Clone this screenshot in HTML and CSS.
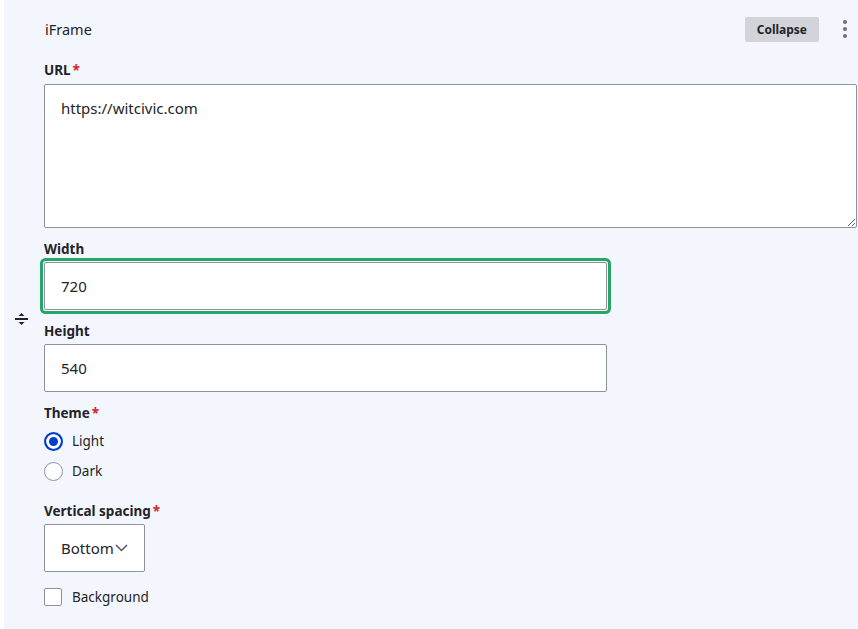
FILE: index.html
```html
<!DOCTYPE html>
<html lang="en">
<head>
    <meta charset="utf-8">
    <meta name="viewport" content="width=device-width, initial-scale=1.0">
    <title>iFrame paragraph</title>
    <link rel="stylesheet" href="styles.css">
</head>

<body>
    <div class="panel">
        <div class="handle">
            <svg width="13" height="12" viewBox="0 0 13 12">
                <path d="M3.5 3 L6.5 0 L9.5 3 Z" fill="#232429"/>
                <rect x="0" y="5" width="13" height="2" fill="#232429"/>
                <path d="M3.5 9 L6.5 12 L9.5 9 Z" fill="#232429"/>
            </svg>
        </div>

        <div class="content">
            <div class="header">
                <span class="title">iFrame</span>
                <button class="collapse" type="button">Collapse</button>
                <span class="kebab"><i></i><i></i><i></i></span>
            </div>

            <div class="form-item first">
                <label class="label required" for="url">URL</label>
                <textarea id="url" class="textarea">https://witcivic.com</textarea>
            </div>

            <div class="form-item">
                <label class="label" for="width">Width</label>
                <input type="text" id="width" class="input focused" value="720">
            </div>

            <div class="form-item">
                <label class="label" for="height">Height</label>
                <input type="text" id="height" class="input" value="540">
            </div>

            <div class="form-item">
                <span class="label required">Theme</span>
                <label class="option">
                    <input type="radio" name="theme" class="radio" checked>
                    <span>Light</span>
                </label>
                <label class="option">
                    <input type="radio" name="theme" class="radio">
                    <span>Dark</span>
                </label>
            </div>

            <div class="form-item spacing">
                <label class="label required" for="spacing">Vertical spacing</label>
                <select id="spacing" class="select">
                    <option>Bottom</option>
                    <option>Top</option>
                    <option>Both</option>
                    <option>None</option>
                </select>
            </div>

            <label class="option checkbox-row">
                <input type="checkbox" class="checkbox">
                <span>Background</span>
            </label>
        </div>
    </div>
</body>
</html>
```

FILE: styles.css
```css
body {
    font-family: "Noto Sans", "Open Sans", sans-serif;
    color: #232429;
    background-color: #ffffff;
    margin: 0;
}

.panel {
    margin-left: 4px;
    min-height: 629px;
    background-color: #f3f6fd;
    display: grid;
    grid-template-columns: 40px 1fr;
}

.handle {
    align-self: center;
    display: flex;
    justify-content: center;
    padding-top: 8px;
    padding-right: 6px;
}

.content {
    padding-right: 1px;
}

.header {
    display: flex;
    align-items: center;
    height: 32px;
    margin-top: 13px;
    padding-left: 1px;
    padding-right: 10px;
}

.title {
    flex: 1;
    font-size: 14.5px;
}

.collapse {
    font-family: inherit;
    font-size: 12px;
    font-weight: bold;
    color: #232429;
    background-color: #d3d4d9;
    border: none;
    border-radius: 2px;
    height: 25px;
    padding: 0 12px;
    margin-right: 24px;
}

.kebab {
    display: flex;
    flex-direction: column;
    gap: 3px;
    width: 4px;
}

.kebab i {
    display: block;
    width: 4px;
    height: 4px;
    border-radius: 50%;
    background-color: #6e6f75;
}

.form-item {
    margin-top: 12px;
}

.form-item.first {
    margin-top: 16px;
}

.form-item.spacing {
    margin-top: 16px;
}

.label {
    display: block;
    font-size: 13.5px;
    font-weight: bold;
    line-height: 18px;
    margin-bottom: 4px;
}

.required::after {
    content: "*";
    color: #dc2323;
    margin-left: 2px;
}

.textarea,
.input,
.select {
    font-family: inherit;
    font-size: 15px;
    color: #232429;
    background-color: #ffffff;
    border: 1px solid #8e929c;
    border-radius: 2px;
    box-sizing: border-box;
    outline: none;
}

.textarea {
    display: block;
    width: 100%;
    height: 144px;
    padding: 11px 16px;
    line-height: 24px;
    resize: vertical;
    margin-top: 5px;
}

.input {
    display: block;
    width: 563px;
    height: 48px;
    padding: 0 16px;
}

.input.focused {
    box-shadow: 0 0 0 1px #ffffff, 0 0 0 4px #26a769;
    border-radius: 2px;
}

.option {
    display: flex;
    align-items: center;
    height: 30px;
    font-size: 13.5px;
}

.radio,
.checkbox {
    appearance: none;
    -webkit-appearance: none;
    width: 19px;
    height: 19px;
    margin: 0 9px 0 0;
    background-color: #ffffff;
    border: 1px solid #8e929c;
    box-sizing: border-box;
}

.radio {
    border-radius: 50%;
}

.radio:checked {
    border: 2px solid #003ecc;
    background-color: #003ecc;
    box-shadow: inset 0 0 0 3px #ffffff;
}

.checkbox {
    border-radius: 2px;
    width: 18px;
    height: 18px;
    margin-right: 10px;
}

.select {
    appearance: none;
    -webkit-appearance: none;
    height: 48px;
    width: 101px;
    padding: 0 16px;
    background-image: url("data:image/svg+xml,%3Csvg xmlns='http://www.w3.org/2000/svg' width='13' height='8' viewBox='0 0 13 8'%3E%3Cpath d='M1 1 L6.5 6.5 L12 1' fill='none' stroke='%23545560' stroke-width='1.5'/%3E%3C/svg%3E");
    background-repeat: no-repeat;
    background-position: right 16px center;
}

.checkbox-row {
    margin-top: 10px;
    height: 30px;
}
```
